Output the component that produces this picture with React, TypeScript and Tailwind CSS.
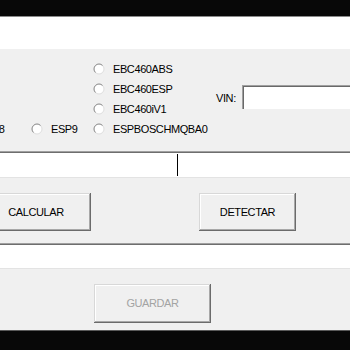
import React from "react";

function Radio() {
  return (
    <svg width="12" height="12" viewBox="0 0 12 12" className="shrink-0">
      <circle cx="6" cy="6" r="5" fill="#ffffff" stroke="#dedede" strokeWidth="1" />
      <path d="M9.54 2.46 A5 5 0 0 0 2.46 9.54" fill="none" stroke="#8f8f8f" strokeWidth="1" />
    </svg>
  );
}

function Opt({ label }: { label: string }) {
  return (
    <div className="flex h-[20px] items-center gap-[8px] whitespace-nowrap">
      <Radio />
      <span>{label}</span>
    </div>
  );
}

const btn =
  "flex shrink-0 items-center justify-center bg-[#f0f0f0] shadow-[inset_-1px_-1px_0_#6b6b6b,inset_1px_1px_0_#d8d8d8,inset_-2px_-2px_0_#a8a8a8,inset_2px_2px_0_#ffffff]";

export default function App() {
  return (
    <div
      className="flex h-[350px] w-[350px] flex-col overflow-hidden bg-[#f0f0f0] text-[11px] tracking-[-0.4px] text-black"
      style={{ fontFamily: '"Liberation Sans", Arial, sans-serif' }}
    >
      <div className="h-[16px] shrink-0 bg-[#080808]" />
      <div className="h-[1px] shrink-0 bg-[#8a8a8a]" />
      <div className="h-[32px] shrink-0 bg-white" />

      {/* options panel */}
      <div className="flex h-[102px] shrink-0 items-start pt-[10px]">
        <div className="ml-[-42px] flex w-[73px] shrink-0 flex-col">
          <div className="h-[60px]" />
          <Opt label="ESP8" />
        </div>
        <div className="flex w-[62px] shrink-0 flex-col">
          <div className="h-[60px]" />
          <Opt label="ESP9" />
        </div>
        <div className="flex w-[123px] shrink-0 flex-col">
          <Opt label="EBC460ABS" />
          <Opt label="EBC460ESP" />
          <Opt label="EBC460iV1" />
          <Opt label="ESPBOSCHMQBA0" />
        </div>
        <div className="mt-[26px] flex shrink-0 items-center">
          <span className="w-[26px] shrink-0 pt-[3px]">VIN:</span>
          <div className="h-[24px] w-[140px] shrink-0 bg-white shadow-[inset_1px_1px_0_#a0a0a0,inset_2px_2px_0_#696969]" />
        </div>
      </div>
      <div className="h-[1px] shrink-0 bg-[#a0a0a0]" />
      <div className="h-[1px] shrink-0 bg-[#6e6e6e]" />

      {/* text row */}
      <div className="flex h-[24px] shrink-0 items-center bg-white">
        <div className="ml-[177px] h-[22px] w-[1px] shrink-0 bg-black" />
      </div>
      <div className="h-[1px] shrink-0 bg-[#e3e3e3]" />

      {/* buttons */}
      <div className="flex h-[65px] shrink-0 items-start pt-[15px]">
        <div className={`${btn} ml-[-19px] h-[38px] w-[110px]`}>CALCULAR</div>
        <div className={`${btn} ml-[108px] h-[38px] w-[97px]`}>DETECTAR</div>
      </div>
      <div className="h-[1px] shrink-0 bg-[#a0a0a0]" />
      <div className="h-[1px] shrink-0 bg-[#6e6e6e]" />

      <div className="h-[23px] shrink-0 bg-white" />
      <div className="h-[1px] shrink-0 bg-[#e3e3e3]" />

      <div className="flex h-[61px] shrink-0 items-start pt-[15px]">
        <div className={`${btn} ml-[94px] h-[39px] w-[117px] text-[#a3a3a3]`}>GUARDAR</div>
      </div>
      <div className="h-[1px] shrink-0 bg-[#5a5a5a]" />
      <div className="flex-1 bg-[#080808]" />
    </div>
  );
}
